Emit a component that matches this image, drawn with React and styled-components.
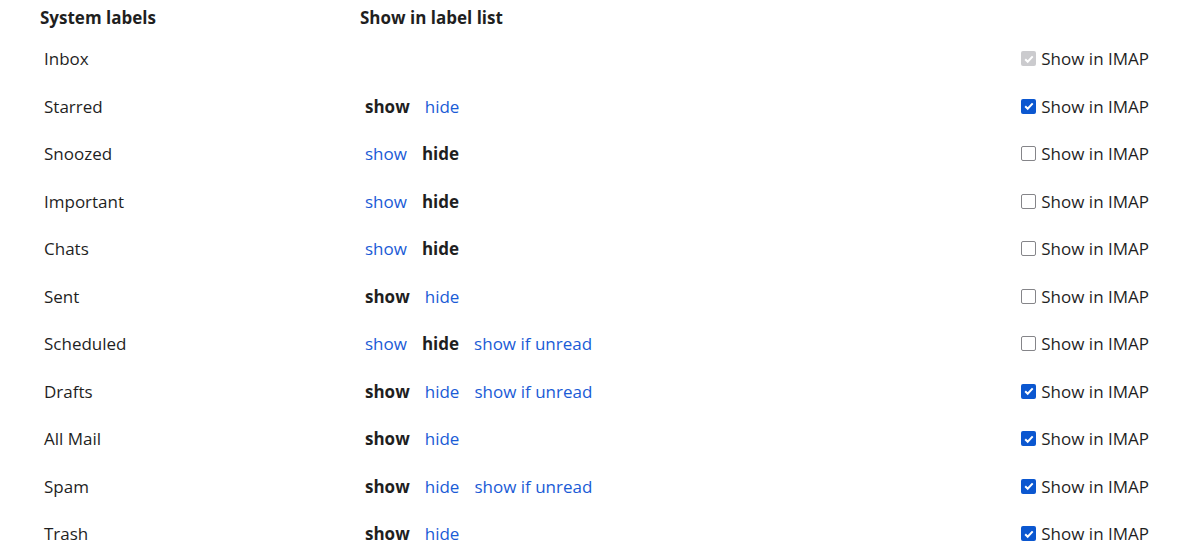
import styled, { createGlobalStyle } from 'styled-components'

const GlobalStyle = createGlobalStyle`
    body {
        margin: 0;
        background: #fff;
        font-family: "Open Sans", Roboto, Arial, sans-serif;
        color: #1f1f1f;
    }
`

const labels = [
    { name: 'Inbox', options: [], imap: 'disabled' },
    { name: 'Starred', options: ['show', 'hide'], selected: 'show', imap: true },
    { name: 'Snoozed', options: ['show', 'hide'], selected: 'hide', imap: false },
    { name: 'Important', options: ['show', 'hide'], selected: 'hide', imap: false },
    { name: 'Chats', options: ['show', 'hide'], selected: 'hide', imap: false },
    { name: 'Sent', options: ['show', 'hide'], selected: 'show', imap: false },
    { name: 'Scheduled', options: ['show', 'hide', 'show if unread'], selected: 'hide', imap: false },
    { name: 'Drafts', options: ['show', 'hide', 'show if unread'], selected: 'show', imap: true },
    { name: 'All Mail', options: ['show', 'hide'], selected: 'show', imap: true },
    { name: 'Spam', options: ['show', 'hide', 'show if unread'], selected: 'show', imap: true },
    { name: 'Trash', options: ['show', 'hide'], selected: 'show', imap: true },
]

const StyledTable = styled.div`
    padding: 0 45px 0 40px;
    display: grid;
    grid-template-columns: 320px 1fr auto;
`

const HeadCell = styled.div`
    height: 35px;
    display: flex;
    align-items: center;
    font-size: 17px;
    font-weight: 700;
    color: #1f1f1f;
`

const Cell = styled.div`
    height: 47.5px;
    display: flex;
    align-items: center;
    padding-left: ${p => p.$indent || 0}px;
    font-size: 17px;
    color: #1f1f1f;
`

const Option = styled.span`
    margin-right: 15px;
    font-size: 17px;
    font-weight: ${p => p.$active ? 700 : 400};
    color: ${p => p.$active ? '#1f1f1f' : '#1a5bd6'};
    cursor: ${p => p.$active ? 'default' : 'pointer'};
`

const Imap = styled.label`
    display: flex;
    align-items: center;
    gap: 5px;
    font-size: 17px;
    color: #1f1f1f;
`

const Box = styled.span`
    width: 15px;
    height: 15px;
    box-sizing: border-box;
    border-radius: 2px;
    display: flex;
    align-items: center;
    justify-content: center;
    background: ${p => p.$state === 'disabled' ? '#cbcbce' : p.$state ? '#0b57d0' : '#fff'};
    border: ${p => p.$state === false ? '1.5px solid #858589' : 'none'};
`

const Check = () => (
    <svg width='12' height='12' viewBox='0 0 12 12'>
        <path d='M2.2 6.3l2.5 2.5 5-5.4' fill='none' stroke='#fff' strokeWidth='2' />
    </svg>
)

export default function App() {
    return (
        <>
            <GlobalStyle />
            <StyledTable>
                <HeadCell>System labels</HeadCell>
                <HeadCell>Show in label list</HeadCell>
                <HeadCell />
                {labels.map(label => (
                    <Row key={label.name} label={label} />
                ))}
            </StyledTable>
        </>
    )
}

const Row = ({ label }) => (
    <>
        <Cell $indent={4}>{label.name}</Cell>
        <Cell $indent={5}>
            {label.options.map(opt => (
                <Option key={opt} $active={opt === label.selected}>{opt}</Option>
            ))}
        </Cell>
        <Cell>
            <Imap>
                <Box $state={label.imap}>{label.imap !== false && <Check />}</Box>
                Show in IMAP
            </Imap>
        </Cell>
    </>
)
